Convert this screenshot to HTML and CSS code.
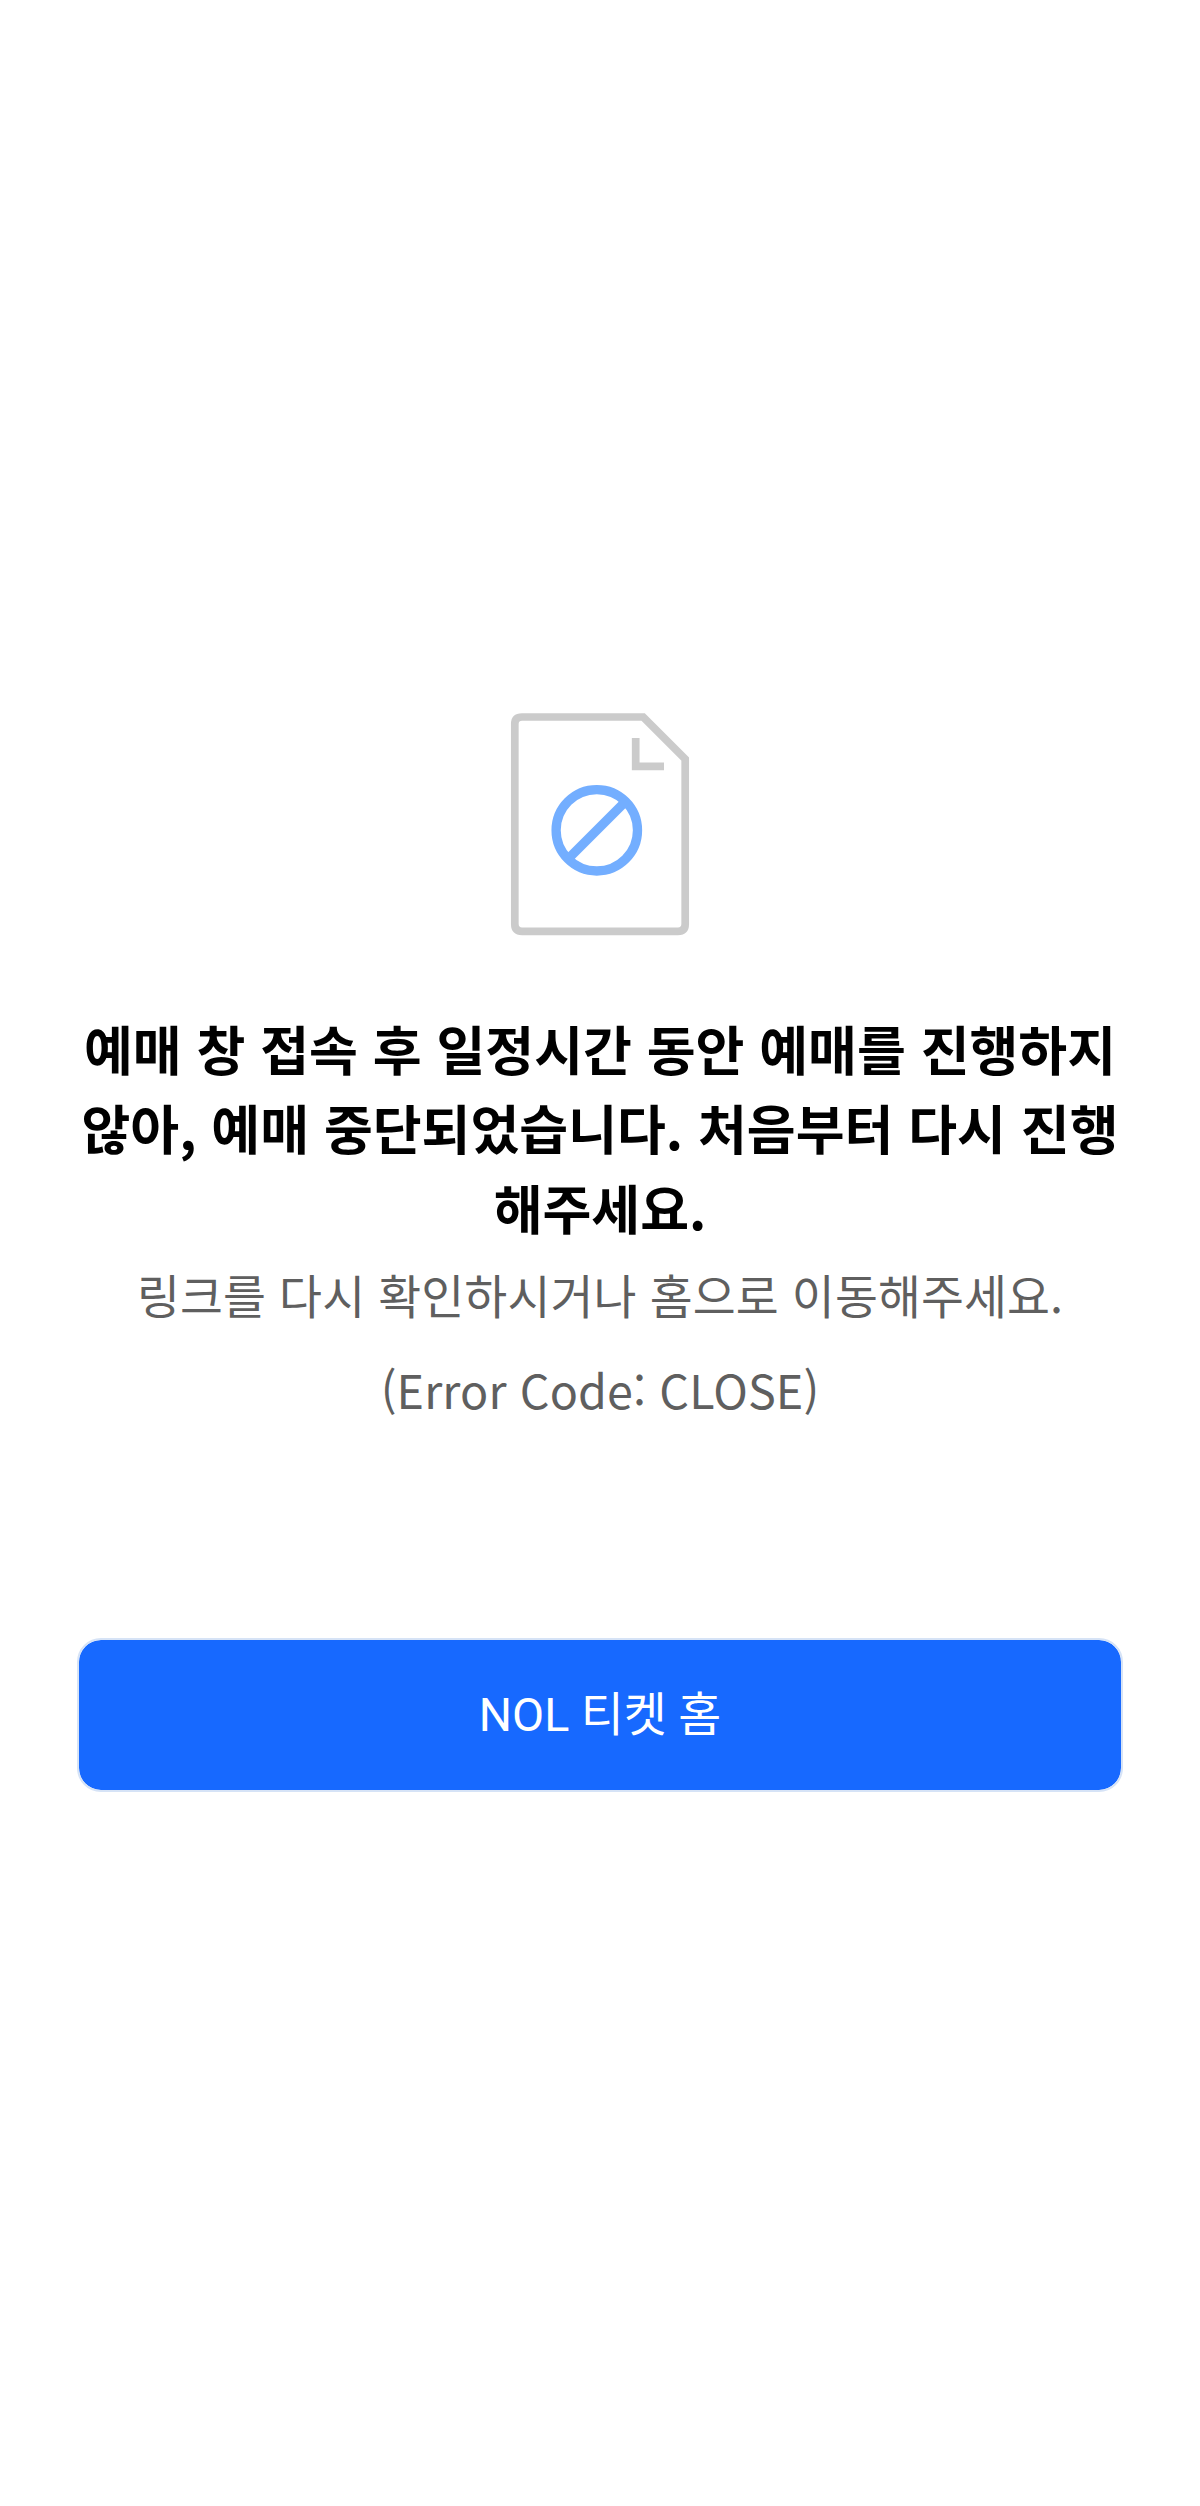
FILE: index.html
```html
<!DOCTYPE html>
<html lang="ko">
<head>
<meta charset="utf-8">
<title>NOL 티켓</title>
<link rel="stylesheet" href="styles.css">
</head>
<body>
<main class="error-page">
  <svg class="error-icon" viewBox="0 0 200 250" aria-hidden="true">
    <path class="sheet" d="M22 17H143.200L185.200 59V224Q185.200 231.300 178 231.300H22Q14.800 231.300 14.800 224V24Q14.800 17 22 17Z"/>
    <path class="sheet" d="M135.700 38V66.400H164"/>
    <circle class="ban" cx="96.800" cy="130.300" r="40.700"/>
    <path class="ban" d="M126 101L68 159"/>
  </svg>
  <h1 class="error-title">예매 창 접속 후 일정시간 동안 예매를 진행하지<br>않아, 예매 중단되었습니다. 처음부터 다시 진행<br>해주세요.</h1>
  <p class="error-text">링크를 다시 확인하시거나 홈으로 이동해주세요.</p>
  <p class="error-text error-code">(Error Code: CLOSE)</p>
  <a class="home-button">NOL 티켓 홈</a>
</main>
</body>
</html>
```
FILE: styles.css
```css
* {
  box-sizing: border-box;
}

body {
  margin: 0;
  background: #fff;
  font-family: "Noto Sans CJK KR", sans-serif;
}

.error-page {
  display: flex;
  flex-direction: column;
  align-items: center;
  min-height: 2506px;
  padding: 700px 77px 0;
  text-align: center;
}

.error-icon {
  display: block;
  width: 200px;
  height: 250px;
  fill: none;
}

.sheet {
  stroke: #cbcbcb;
  stroke-width: 7.700px;
}

.ban {
  stroke: #73aeff;
  stroke-width: 9.300px;
}

.error-title {
  margin: 57.700px 0 0;
  color: #000;
  font-size: 53.100px;
  font-weight: 700;
  line-height: 79.600px;
  white-space: nowrap;
}

.error-text {
  margin: 8px 0 0;
  color: #5f5f5f;
  font-size: 46.670px;
  letter-spacing: 0.100px;
  line-height: 80px;
  white-space: nowrap;
}

.error-code {
  margin-top: 14.800px;
}

.home-button {
  display: flex;
  align-items: center;
  justify-content: center;
  width: 1046px;
  height: 154px;
  margin-top: 208.700px;
  padding-bottom: 9px;
  border: 2px solid #d6e3f6;
  border-radius: 24px;
  background: #1769ff;
  background-clip: padding-box;
  color: #fff;
  font-family: Roboto, "Noto Sans CJK KR", sans-serif;
  font-size: 46.670px;
}
```
